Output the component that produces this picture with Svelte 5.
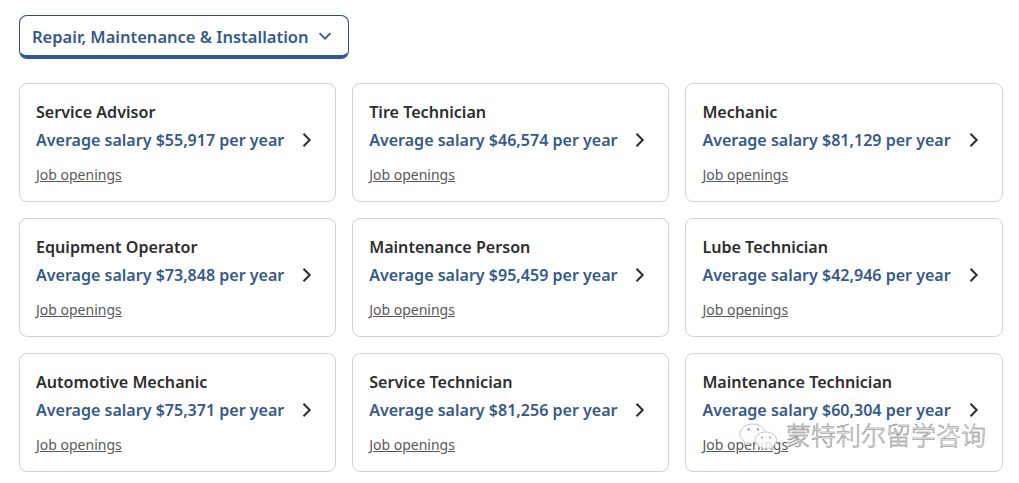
<script>
	const jobs = [
		{ title: 'Service Advisor', salary: '$55,917' },
		{ title: 'Tire Technician', salary: '$46,574' },
		{ title: 'Mechanic', salary: '$81,129' },
		{ title: 'Equipment Operator', salary: '$73,848' },
		{ title: 'Maintenance Person', salary: '$95,459' },
		{ title: 'Lube Technician', salary: '$42,946' },
		{ title: 'Automotive Mechanic', salary: '$75,371' },
		{ title: 'Service Technician', salary: '$81,256' },
		{ title: 'Maintenance Technician', salary: '$60,304' }
	];
</script>

<div class="page">
	<button class="category" type="button">
		<span>Repair, Maintenance &amp; Installation</span>
		<svg width="14" height="14" viewBox="0 0 14 14" fill="none" stroke="#35598a" stroke-width="1.8"><path d="M1.5 4.2 7 9.700l5.500-5.500" /></svg>
	</button>

	<div class="grid">
		{#each jobs as job}
			<div class="card">
				<div class="title">{job.title}</div>
				<div class="salary">
					<span>Average salary {job.salary} per year</span>
					<svg width="12" height="16" viewBox="0 0 12 16" fill="none" stroke="#2d2d2d" stroke-width="2"><path d="M2.500 1.800 8.700 8l-6.200 6.200" /></svg>
				</div>
				<a class="openings" href="#top">Job openings</a>
			</div>
		{/each}
	</div>

	<div class="watermark">
		<svg width="40" height="27" viewBox="0 0 40 27" fill="rgba(255,255,255,0.8)" stroke="#c4c4c4" stroke-width="1">
			<path d="M26 8.500C24.500 3.800 19.500 1 14 1 7 1 1 5.400 1 11c0 3.300 2 6 5 8l-1.200 3.500L9.500 20c1 .3 2 .4 3.200.5" />
			<path d="M27 9c-6.500 0-11 3.800-11 8.300S20.500 25.500 27 25.500c1.300 0 2.500-.2 3.600-.5l3.600 1.800-1-3.100c2.700-1.600 4.300-3.800 4.300-6.400C37.500 12.800 33.500 9 27 9z" />
			<circle cx="9.500" cy="6.500" r="1.200" fill="#9a9a9a" stroke="none" />
			<circle cx="19" cy="6.500" r="1.200" fill="#9a9a9a" stroke="none" />
			<circle cx="23" cy="14.500" r="1" fill="#9a9a9a" stroke="none" />
			<circle cx="31" cy="14.500" r="1" fill="#9a9a9a" stroke="none" />
		</svg>
		<span>蒙特利尔留学咨询</span>
	</div>
</div>

<style>
	:global(body) {
		margin: 0;
		background: #fff;
	}

	.page {
		position: relative;
		width: 1019px;
		height: 483px;
		box-sizing: border-box;
		padding: 15px 16px 0 19px;
		overflow: hidden;
		font-family: "Noto Sans", "Open Sans", sans-serif;
		color: #2d2d2d;
	}

	.category {
		display: flex;
		align-items: center;
		gap: 9px;
		width: 330px;
		height: 44px;
		box-sizing: border-box;
		padding: 1px 12px 0;
		background: #fff;
		border: 1px solid #2d4f7f;
		border-bottom: 4px solid #35598a;
		border-radius: 8px;
		font-family: inherit;
		font-size: 16.5px;
		font-weight: 600;
		color: #35598a;
		white-space: nowrap;
	}

	.grid {
		display: grid;
		grid-template-columns: repeat(3, 317.2px);
		column-gap: 16px;
		row-gap: 16px;
		margin-top: 24px;
	}

	.card {
		height: 119px;
		box-sizing: border-box;
		padding: 16px 16px 0;
		border: 1px solid #d4d2d0;
		border-radius: 8px;
	}

	.title {
		font-size: 16.1px;
		font-weight: 600;
		line-height: 24px;
		color: #2d2d2d;
	}

	.salary {
		display: flex;
		align-items: center;
		justify-content: space-between;
		padding-right: 6px;
		margin-top: 4px;
		font-size: 16.05px;
		font-weight: 600;
		line-height: 24px;
		color: #35598a;
	}

	.openings {
		display: inline-block;
		margin-top: 13px;
		font-size: 14px;
		line-height: 20px;
		color: #595959;
		text-decoration: underline;
	}

	.watermark {
		position: absolute;
		left: 739px;
		top: 422px;
		display: flex;
		align-items: center;
		gap: 7px;
		pointer-events: none;
	}

	.watermark span {
		margin-top: -4px;
		font-family: "Noto Sans CJK SC", sans-serif;
		font-size: 25px;
		font-weight: 300;
		line-height: 32px;
		color: rgba(255, 255, 255, 0.85);
		-webkit-text-stroke: 0.5px #777;
	}
</style>
